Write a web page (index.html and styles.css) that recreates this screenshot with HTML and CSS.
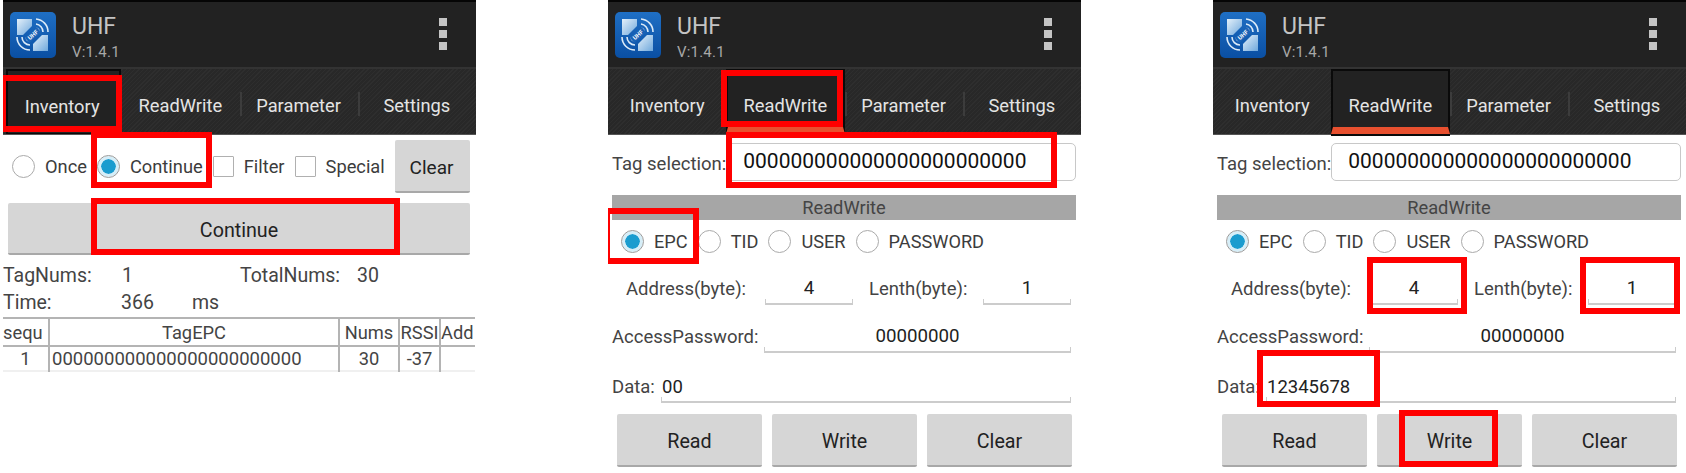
FILE: index.html
```html
<!DOCTYPE html>
<html lang="en">

<head>
    <meta charset="UTF-8">
    <title>UHF</title>
    <link rel="stylesheet" href="styles.css">
</head>

<body>
    <svg class="defs" width="0" height="0">
        <defs>
            <linearGradient id="logo-bg" x1="0" y1="0" x2="0" y2="1">
                <stop offset="0" stop-color="#1f6fc4" />
                <stop offset="1" stop-color="#0a4fa3" />
            </linearGradient>
            <linearGradient id="logo-tile" x1="0" y1="0" x2="1" y2="1">
                <stop offset="0" stop-color="#e4f0fa" />
                <stop offset="1" stop-color="#6fa8dc" />
            </linearGradient>
            <symbol id="logo" viewBox="0 0 46 46">
                <rect width="46" height="46" rx="5" fill="url(#logo-bg)" />
                <path d="M7 7h15v7l-9 9H7z" fill="url(#logo-tile)" />
                <path d="M38 39H23v-7l9-9h6z" fill="url(#logo-tile)" />
                <path d="M26 7a13 13 0 0 1 12 13M26 12a8 8 0 0 1 7 8M26 16a4 4 0 0 1 3 4" fill="none" stroke="#dcebf8" stroke-width="1.6" />
                <path d="M20 38a13 13 0 0 1-13-13M20 33a8 8 0 0 1-8-8M20 29a4 4 0 0 1-4-4" fill="none" stroke="#dcebf8" stroke-width="1.6" />
                <rect x="15" y="19.500" width="16" height="7" transform="rotate(-42 23 23)" fill="#1a62b5" />
                <text x="23" y="25" class="logo-text" transform="rotate(-42 23 23)">UHF</text>
            </symbol>
        </defs>
    </svg>

    <div class="shots">
        <!-- Inventory -->
        <div class="phone">
            <div class="app-header">
                <svg class="app-logo"><use href="#logo" /></svg>
                <div class="app-title">
                    <div class="app-name">UHF</div>
                    <div class="app-version">V:1.4.1</div>
                </div>
                <div class="menu-dots"><i></i><i></i><i></i></div>
            </div>
            <div class="tabs">
                <div class="tab tab-plain">Inventory</div>
                <div class="tab">ReadWrite</div>
                <div class="tab tab-sep">Parameter</div>
                <div class="tab tab-sep">Settings</div>
            </div>
            <div class="mode-row">
                <span class="radio"></span><span class="opt-label">Once</span>
                <span class="radio checked"></span><span class="opt-label">Continue</span>
                <span class="check"></span><span class="opt-label">Filter</span>
                <span class="check"></span><span class="opt-label">Special</span>
                <button class="btn btn-clear">Clear</button>
            </div>
            <button class="btn btn-wide">Continue</button>
            <div class="stat-row stat-top">
                <span>TagNums:</span><span>1</span><span>TotalNums:</span><span>30</span>
            </div>
            <div class="stat-row stat-time">
                <span>Time:</span><span>366</span><span>ms</span>
            </div>
            <table class="tag-table">
                <colgroup>
                    <col class="col-seq"><col class="col-epc"><col class="col-nums"><col class="col-rssi"><col class="col-add">
                </colgroup>
                <tr>
                    <th class="cell-seq">sequ</th>
                    <th>TagEPC</th>
                    <th>Nums</th>
                    <th>RSSI</th>
                    <th class="cell-add">Add</th>
                </tr>
                <tr>
                    <td>1</td>
                    <td class="cell-epc">000000000000000000000000</td>
                    <td>30</td>
                    <td>-37</td>
                    <td></td>
                </tr>
            </table>
            <div class="mark mark-inventory"></div>
            <div class="mark mark-continue"></div>
            <div class="mark mark-start"></div>
        </div>

        <!-- ReadWrite, EPC selected -->
        <div class="phone">
            <div class="app-header">
                <svg class="app-logo"><use href="#logo" /></svg>
                <div class="app-title">
                    <div class="app-name">UHF</div>
                    <div class="app-version">V:1.4.1</div>
                </div>
                <div class="menu-dots"><i></i><i></i><i></i></div>
            </div>
            <div class="tabs">
                <div class="tab">Inventory</div>
                <div class="tab tab-active">ReadWrite</div>
                <div class="tab tab-sep">Parameter</div>
                <div class="tab tab-sep">Settings</div>
            </div>
            <div class="tag-row">
                <span class="field-label">Tag selection:</span>
                <div class="tag-input">000000000000000000000000</div>
            </div>
            <div class="section-bar">ReadWrite</div>
            <div class="bank-row">
                <span class="radio checked"></span><span class="opt-label">EPC</span>
                <span class="radio"></span><span class="opt-label">TID</span>
                <span class="radio"></span><span class="opt-label">USER</span>
                <span class="radio"></span><span class="opt-label">PASSWORD</span>
            </div>
            <div class="form-row row-address">
                <span class="field-label label-address">Address(byte):</span>
                <div class="line-field field-short">4</div>
                <span class="field-label label-length">Lenth(byte):</span>
                <div class="line-field field-short">1</div>
            </div>
            <div class="form-row row-password">
                <span class="field-label label-password">AccessPassword:</span>
                <div class="line-field field-grow">00000000</div>
            </div>
            <div class="form-row row-data">
                <span class="field-label label-data">Data:</span>
                <div class="line-field field-grow field-left">00</div>
            </div>
            <div class="btn-row">
                <button class="btn">Read</button>
                <button class="btn">Write</button>
                <button class="btn">Clear</button>
            </div>
            <div class="mark mark-rw-tab"></div>
            <div class="mark mark-tag"></div>
            <div class="mark mark-epc"></div>
        </div>

        <!-- ReadWrite, write data -->
        <div class="phone">
            <div class="app-header">
                <svg class="app-logo"><use href="#logo" /></svg>
                <div class="app-title">
                    <div class="app-name">UHF</div>
                    <div class="app-version">V:1.4.1</div>
                </div>
                <div class="menu-dots"><i></i><i></i><i></i></div>
            </div>
            <div class="tabs">
                <div class="tab">Inventory</div>
                <div class="tab tab-active">ReadWrite</div>
                <div class="tab tab-sep">Parameter</div>
                <div class="tab tab-sep">Settings</div>
            </div>
            <div class="tag-row">
                <span class="field-label">Tag selection:</span>
                <div class="tag-input">000000000000000000000000</div>
            </div>
            <div class="section-bar">ReadWrite</div>
            <div class="bank-row">
                <span class="radio checked"></span><span class="opt-label">EPC</span>
                <span class="radio"></span><span class="opt-label">TID</span>
                <span class="radio"></span><span class="opt-label">USER</span>
                <span class="radio"></span><span class="opt-label">PASSWORD</span>
            </div>
            <div class="form-row row-address">
                <span class="field-label label-address">Address(byte):</span>
                <div class="line-field field-short">4</div>
                <span class="field-label label-length">Lenth(byte):</span>
                <div class="line-field field-short">1</div>
            </div>
            <div class="form-row row-password">
                <span class="field-label label-password">AccessPassword:</span>
                <div class="line-field field-grow">00000000</div>
            </div>
            <div class="form-row row-data">
                <span class="field-label label-data">Data:</span>
                <div class="line-field field-grow field-left">12345678</div>
            </div>
            <div class="btn-row">
                <button class="btn">Read</button>
                <button class="btn">Write</button>
                <button class="btn">Clear</button>
            </div>
            <div class="mark mark-address"></div>
            <div class="mark mark-length"></div>
            <div class="mark mark-data"></div>
            <div class="mark mark-write"></div>
        </div>
    </div>
</body>

</html>
```

FILE: styles.css
```css
* {
    box-sizing: border-box;
    margin: 0;
    padding: 0;
}

body {
    font-family: Roboto, sans-serif;
    background-color: #fff;
    color: #444;
    overflow: hidden;
}

.defs {
    display: block;
}

.logo-text {
    font-family: Roboto, sans-serif;
    font-size: 6px;
    font-weight: 700;
    fill: #fff;
    text-anchor: middle;
}

.shots {
    display: flex;
    gap: 132px;
    padding-left: 3px;
}

.phone {
    width: 473px;
    height: 473px;
    position: relative;
    overflow: hidden;
}

/* title bar */
.app-header {
    height: 69px;
    background-color: #222;
    border-top: 2px solid #050505;
    border-bottom: 2px solid #333;
    display: flex;
    align-items: flex-start;
    padding: 10px 29px 0 7px;
}

.app-logo {
    width: 46px;
    height: 46px;
}

.app-title {
    margin-left: 16px;
    margin-top: 2px;
    flex: 1;
}

.app-name {
    font-size: 23px;
    line-height: 26px;
    color: #c4c4c4;
}

.app-version {
    font-size: 15px;
    line-height: 18px;
    margin-top: 3px;
    color: #a8a8a8;
    letter-spacing: 0.2px;
}

.menu-dots {
    display: flex;
    flex-direction: column;
    gap: 4px;
    margin-top: 6px;
}

.menu-dots i {
    display: block;
    width: 8px;
    height: 8px;
    background-color: #c4c4c4;
}

/* tabs */
.tabs {
    height: 66px;
    display: grid;
    grid-template-columns: repeat(4, 1fr);
    background-color: #2b2b2b;
    background-image: repeating-linear-gradient(135deg, #2e2e2e 0, #2e2e2e 1px, #282828 1px, #282828 3px);
    border-bottom: 1px solid #555;
}

.tab {
    display: flex;
    align-items: center;
    justify-content: center;
    font-size: 18.300px;
    color: #e4e4e4;
    padding-top: 8px;
    position: relative;
}

.tab-sep::before {
    content: '';
    position: absolute;
    left: 0;
    top: 23px;
    height: 24px;
    width: 2px;
    background-color: #3c3c3c;
}

.tab-plain {
    background: #222;
    border: 2px solid #0a0a0a;
    border-bottom-width: 1px;
    margin-left: 3px;
    padding-right: 3px;
}

.tab-active {
    background: #222;
    border: 2px solid #0a0a0a;
    border-bottom: 7px solid #e8502f;
    box-shadow: 0 2px 0 #0a0a0a;
    padding-top: 13px;
}

/* inventory page */
.mode-row {
    display: flex;
    align-items: center;
    height: 53px;
    margin-top: 5px;
    padding-left: 9px;
}

.radio {
    width: 23px;
    height: 23px;
    flex: none;
    border: 1.500px solid #aaa;
    border-radius: 50%;
    background-color: #fff;
    margin-right: 10px;
}

.radio.checked {
    border-color: #9a9a9a;
    background-color: #1a9ccf;
    background-clip: content-box;
    padding: 3px;
    box-shadow: inset 0 0 0 3px #d6eef8;
}

.check {
    width: 21px;
    height: 21px;
    flex: none;
    border: 1.500px solid #b0b0b0;
    border-radius: 1px;
    margin-right: 10px;
}

.opt-label {
    font-size: 18.300px;
    margin-right: 10px;
    color: #3c3c3c;
}

.btn {
    font-family: Roboto, sans-serif;
    font-size: 19.700px;
    color: #222;
    background-color: #d6d6d6;
    border: none;
    border-bottom: 2px solid #a8a8a8;
    border-radius: 2px;
    padding-top: 4px;
}

.btn-clear {
    width: 75px;
    height: 53px;
    font-size: 19px;
    margin-left: auto;
    margin-right: 6px;
    padding-right: 2px;
    flex: none;
}

.btn-wide {
    display: block;
    width: 462px;
    height: 52px;
    margin: 10px 0 0 5px;
}

.stat-row {
    display: grid;
    font-size: 19.500px;
    line-height: 27px;
    color: #444;
}

.stat-top {
    grid-template-columns: 119px 118px 117px 1fr;
    margin-top: 7px;
}

.stat-time {
    grid-template-columns: 118px 71px 1fr;
}

.tag-table {
    width: 472px;
    table-layout: fixed;
    border-collapse: collapse;
    margin-top: 1px;
    font-size: 18.300px;
    color: #444;
    border-top: 2px solid #b4b4b4;
    border-bottom: 2px solid #f0f0f0;
}

.col-seq {
    width: 46px;
}

.col-nums {
    width: 60px;
}

.col-rssi {
    width: 41px;
}

.col-add {
    width: 35px;
}

.tag-table th,
.tag-table td {
    font-weight: 400;
    text-align: center;
    white-space: nowrap;
    overflow: hidden;
    padding: 0;
    border-left: 2px solid #b4b4b4;
}

.tag-table th:first-child,
.tag-table td:first-child {
    border-left: none;
}

.tag-table th {
    height: 28px;
    border-bottom: 2px solid #b4b4b4;
}

.tag-table td {
    height: 25px;
}

.tag-table .cell-seq,
.tag-table .cell-add {
    text-align: left;
}

.tag-table .cell-epc {
    text-align: left;
    font-size: 18.500px;
    padding-left: 2px;
}

/* readwrite page */
.tag-row {
    display: flex;
    align-items: center;
    height: 38px;
    margin: 8px 5px 0 4px;
}

.field-label {
    font-size: 18.500px;
    line-height: 32px;
    color: #444;
    white-space: nowrap;
}

.tag-row .field-label {
    padding-top: 3px;
}

.tag-input {
    margin-left: auto;
    width: 351px;
    height: 38px;
    border: 1.500px solid #c8c8c8;
    border-radius: 5px;
    font-size: 21px;
    line-height: 35px;
    padding-left: 16px;
    color: #111;
}

.section-bar {
    height: 25px;
    margin: 14px 5px 0 4px;
    background-color: #a6a6a6;
    font-size: 18.300px;
    line-height: 25px;
    text-align: center;
    color: #444;
}

.bank-row {
    display: flex;
    align-items: center;
    height: 42px;
    padding: 1px 0 0 13px;
}

.bank-row .opt-label {
    font-size: 18.200px;
}

.form-row {
    display: flex;
    align-items: flex-end;
    height: 32px;
    padding-right: 10px;
}

.row-address {
    margin-top: 11px;
    padding-left: 18px;
}

.row-password {
    margin-top: 16px;
    padding-left: 4px;
}

.row-data {
    margin-top: 18px;
    padding-left: 4px;
}

.label-address {
    width: 139px;
}

.label-length {
    margin-left: 16px;
    width: 114px;
}

.label-password {
    width: 152px;
}

.label-data {
    width: 49px;
}

.line-field {
    height: 32px;
    font-size: 18.700px;
    line-height: 31px;
    text-align: center;
    color: #222;
    border-bottom: 2px solid #ccc;
    background:
        linear-gradient(#ccc, #ccc) left bottom / 1px 4px no-repeat,
        linear-gradient(#ccc, #ccc) right bottom / 1px 4px no-repeat;
}

.field-short {
    width: 88px;
}

.field-grow {
    flex: 1;
}

.field-left {
    text-align: left;
    padding-left: 1px;
    padding-top: 1px;
    font-size: 18.500px;
}

.btn-row {
    display: flex;
    gap: 10px;
    margin-top: 11px;
    padding-left: 9px;
}

.btn-row .btn {
    width: 145px;
    height: 53px;
}

/* red callouts drawn over the screenshot */
.mark {
    position: absolute;
    border: 6px solid #f00;
}

.mark-inventory {
    left: -3px;
    top: 75px;
    width: 122px;
    height: 57px;
}

.mark-continue {
    left: 88px;
    top: 132px;
    width: 121px;
    height: 56px;
}

.mark-start {
    left: 88px;
    top: 198px;
    width: 309px;
    height: 57px;
}

.mark-rw-tab {
    left: 113px;
    top: 70px;
    width: 122px;
    height: 57px;
}

.mark-tag {
    left: 118px;
    top: 132px;
    width: 331px;
    height: 56px;
}

.mark-epc {
    left: -4px;
    top: 208px;
    width: 95px;
    height: 56px;
}

.mark-address {
    left: 154px;
    top: 257px;
    width: 100px;
    height: 57px;
}

.mark-length {
    left: 367px;
    top: 257px;
    width: 100px;
    height: 57px;
}

.mark-data {
    left: 44px;
    top: 350px;
    width: 123px;
    height: 57px;
}

.mark-write {
    left: 186px;
    top: 410px;
    width: 99px;
    height: 57px;
}
```
